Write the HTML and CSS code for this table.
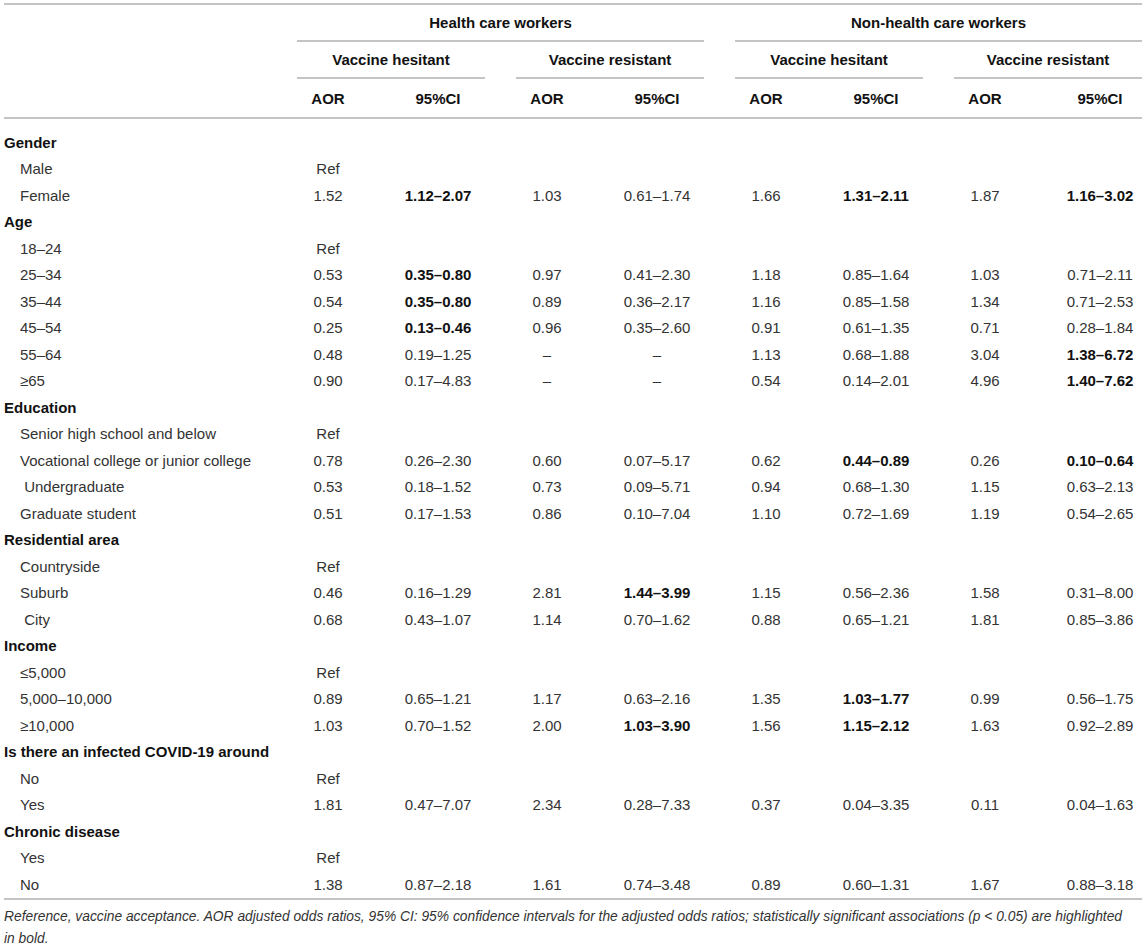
FILE: index.html
```html
<!DOCTYPE html>
<html lang="en">
<head>
  <meta charset="UTF-8">
  <title>Adjusted odds ratios</title>
  <link rel="stylesheet" href="styles.css">
</head>
<body>
  <div class="wrap">
    <table class="odds">
      <colgroup>
        <col class="c-label">
        <col class="c-aor"><col class="c-ci">
        <col class="c-aor"><col class="c-ci">
        <col class="c-aor"><col class="c-ci">
        <col class="c-aor"><col class="c-ci">
      </colgroup>
      <thead>
        <tr class="h1">
          <th></th>
          <th colspan="4" class="grp"><div class="rule">Health care workers</div></th>
          <th colspan="4" class="grp"><div class="rule">Non-health care workers</div></th>
        </tr>
        <tr class="h2">
          <th></th>
          <th colspan="2" class="grp"><div class="rule">Vaccine hesitant</div></th>
          <th colspan="2" class="grp"><div class="rule">Vaccine resistant</div></th>
          <th colspan="2" class="grp"><div class="rule">Vaccine hesitant</div></th>
          <th colspan="2" class="grp"><div class="rule">Vaccine resistant</div></th>
        </tr>
        <tr class="h3">
          <th></th>
          <th class="aor">AOR</th><th class="ci">95%CI</th>
          <th class="aor">AOR</th><th class="ci">95%CI</th>
          <th class="aor">AOR</th><th class="ci">95%CI</th>
          <th class="aor">AOR</th><th class="ci">95%CI</th>
        </tr>
      </thead>
      <tbody>
        <tr class="cat first"><td colspan="9">Gender</td></tr>
        <tr><td class="lab">Male</td><td class="aor">Ref</td><td></td><td></td><td></td><td></td><td></td><td></td><td></td></tr>
        <tr><td class="lab">Female</td><td class="aor">1.52</td><td class="ci"><b>1.12–2.07</b></td><td class="aor">1.03</td><td class="ci">0.61–1.74</td><td class="aor">1.66</td><td class="ci"><b>1.31–2.11</b></td><td class="aor">1.87</td><td class="ci"><b>1.16–3.02</b></td></tr>

        <tr class="cat"><td colspan="9">Age</td></tr>
        <tr><td class="lab">18–24</td><td class="aor">Ref</td><td></td><td></td><td></td><td></td><td></td><td></td><td></td></tr>
        <tr><td class="lab">25–34</td><td class="aor">0.53</td><td class="ci"><b>0.35–0.80</b></td><td class="aor">0.97</td><td class="ci">0.41–2.30</td><td class="aor">1.18</td><td class="ci">0.85–1.64</td><td class="aor">1.03</td><td class="ci">0.71–2.11</td></tr>
        <tr><td class="lab">35–44</td><td class="aor">0.54</td><td class="ci"><b>0.35–0.80</b></td><td class="aor">0.89</td><td class="ci">0.36–2.17</td><td class="aor">1.16</td><td class="ci">0.85–1.58</td><td class="aor">1.34</td><td class="ci">0.71–2.53</td></tr>
        <tr><td class="lab">45–54</td><td class="aor">0.25</td><td class="ci"><b>0.13–0.46</b></td><td class="aor">0.96</td><td class="ci">0.35–2.60</td><td class="aor">0.91</td><td class="ci">0.61–1.35</td><td class="aor">0.71</td><td class="ci">0.28–1.84</td></tr>
        <tr><td class="lab">55–64</td><td class="aor">0.48</td><td class="ci">0.19–1.25</td><td class="aor">–</td><td class="ci">–</td><td class="aor">1.13</td><td class="ci">0.68–1.88</td><td class="aor">3.04</td><td class="ci"><b>1.38–6.72</b></td></tr>
        <tr><td class="lab">≥65</td><td class="aor">0.90</td><td class="ci">0.17–4.83</td><td class="aor">–</td><td class="ci">–</td><td class="aor">0.54</td><td class="ci">0.14–2.01</td><td class="aor">4.96</td><td class="ci"><b>1.40–7.62</b></td></tr>

        <tr class="cat"><td colspan="9">Education</td></tr>
        <tr><td class="lab">Senior high school and below</td><td class="aor">Ref</td><td></td><td></td><td></td><td></td><td></td><td></td><td></td></tr>
        <tr><td class="lab">Vocational college or junior college</td><td class="aor">0.78</td><td class="ci">0.26–2.30</td><td class="aor">0.60</td><td class="ci">0.07–5.17</td><td class="aor">0.62</td><td class="ci"><b>0.44–0.89</b></td><td class="aor">0.26</td><td class="ci"><b>0.10–0.64</b></td></tr>
        <tr><td class="lab">&nbsp;Undergraduate</td><td class="aor">0.53</td><td class="ci">0.18–1.52</td><td class="aor">0.73</td><td class="ci">0.09–5.71</td><td class="aor">0.94</td><td class="ci">0.68–1.30</td><td class="aor">1.15</td><td class="ci">0.63–2.13</td></tr>
        <tr><td class="lab">Graduate student</td><td class="aor">0.51</td><td class="ci">0.17–1.53</td><td class="aor">0.86</td><td class="ci">0.10–7.04</td><td class="aor">1.10</td><td class="ci">0.72–1.69</td><td class="aor">1.19</td><td class="ci">0.54–2.65</td></tr>

        <tr class="cat"><td colspan="9">Residential area</td></tr>
        <tr><td class="lab">Countryside</td><td class="aor">Ref</td><td></td><td></td><td></td><td></td><td></td><td></td><td></td></tr>
        <tr><td class="lab">Suburb</td><td class="aor">0.46</td><td class="ci">0.16–1.29</td><td class="aor">2.81</td><td class="ci"><b>1.44–3.99</b></td><td class="aor">1.15</td><td class="ci">0.56–2.36</td><td class="aor">1.58</td><td class="ci">0.31–8.00</td></tr>
        <tr><td class="lab">&nbsp;City</td><td class="aor">0.68</td><td class="ci">0.43–1.07</td><td class="aor">1.14</td><td class="ci">0.70–1.62</td><td class="aor">0.88</td><td class="ci">0.65–1.21</td><td class="aor">1.81</td><td class="ci">0.85–3.86</td></tr>

        <tr class="cat"><td colspan="9">Income</td></tr>
        <tr><td class="lab">≤5,000</td><td class="aor">Ref</td><td></td><td></td><td></td><td></td><td></td><td></td><td></td></tr>
        <tr><td class="lab">5,000–10,000</td><td class="aor">0.89</td><td class="ci">0.65–1.21</td><td class="aor">1.17</td><td class="ci">0.63–2.16</td><td class="aor">1.35</td><td class="ci"><b>1.03–1.77</b></td><td class="aor">0.99</td><td class="ci">0.56–1.75</td></tr>
        <tr><td class="lab">≥10,000</td><td class="aor">1.03</td><td class="ci">0.70–1.52</td><td class="aor">2.00</td><td class="ci"><b>1.03–3.90</b></td><td class="aor">1.56</td><td class="ci"><b>1.15–2.12</b></td><td class="aor">1.63</td><td class="ci">0.92–2.89</td></tr>

        <tr class="cat"><td colspan="9">Is there an infected COVID-19 around</td></tr>
        <tr><td class="lab">No</td><td class="aor">Ref</td><td></td><td></td><td></td><td></td><td></td><td></td><td></td></tr>
        <tr><td class="lab">Yes</td><td class="aor">1.81</td><td class="ci">0.47–7.07</td><td class="aor">2.34</td><td class="ci">0.28–7.33</td><td class="aor">0.37</td><td class="ci">0.04–3.35</td><td class="aor">0.11</td><td class="ci">0.04–1.63</td></tr>

        <tr class="cat"><td colspan="9">Chronic disease</td></tr>
        <tr><td class="lab">Yes</td><td class="aor">Ref</td><td></td><td></td><td></td><td></td><td></td><td></td><td></td></tr>
        <tr><td class="lab">No</td><td class="aor">1.38</td><td class="ci">0.87–2.18</td><td class="aor">1.61</td><td class="ci">0.74–3.48</td><td class="aor">0.89</td><td class="ci">0.60–1.31</td><td class="aor">1.67</td><td class="ci">0.88–3.18</td></tr>
      </tbody>
    </table>

    <p class="note">Reference, vaccine acceptance. AOR adjusted odds ratios, 95% CI: 95% confidence intervals for the adjusted odds ratios; statistically significant associations (p &lt; 0.05) are highlighted <span class="nowrap">in bold.</span></p>
  </div>
</body>
</html>
```

FILE: styles.css
```css
body {
  margin: 0;
  font-family: "Liberation Sans", Arial, Helvetica, sans-serif;
  font-size: 15px;
  color: #333;
  background: #fff;
}

.wrap {
  padding: 3px 4px 0;
}

.odds {
  width: 1138px;
  border-collapse: collapse;
  table-layout: fixed;
  border-top: 2px solid #c4c4c4;
  border-bottom: 2px solid #c4c4c4;
}

.c-label { width: 262px; }
.c-aor { width: 81px; }
.c-ci { width: 138px; }

.odds th {
  font-weight: bold;
  color: #111;
  padding: 0;
  text-align: center;
}

.odds th.grp {
  padding-left: 31px;
}

.rule {
  height: 35px;
  line-height: 36px;
  border-bottom: 2px solid #c4c4c4;
}

.h3 th {
  height: 38px;
  border-bottom: 2px solid #c4c4c4;
}

.odds td {
  height: 26.5px;
  padding: 0;
  white-space: nowrap;
}

.odds .aor {
  padding-left: 43px;
  text-align: center;
}

.odds .ci {
  padding-left: 44px;
  text-align: center;
}

.odds .ci:last-child {
  padding-left: 54px;
}

.odds td.lab {
  padding-left: 16px;
}

.odds b {
  color: #111;
}

.cat td {
  font-weight: bold;
  color: #111;
}

.cat.first td {
  padding-top: 10px;
  height: 26.5px;
}

.note {
  width: 1138px;
  margin: 6px 0 0;
  font-size: 13.8px;
  line-height: 22px;
  font-style: italic;
  color: #333;
}

.nowrap {
  white-space: nowrap;
}
```
